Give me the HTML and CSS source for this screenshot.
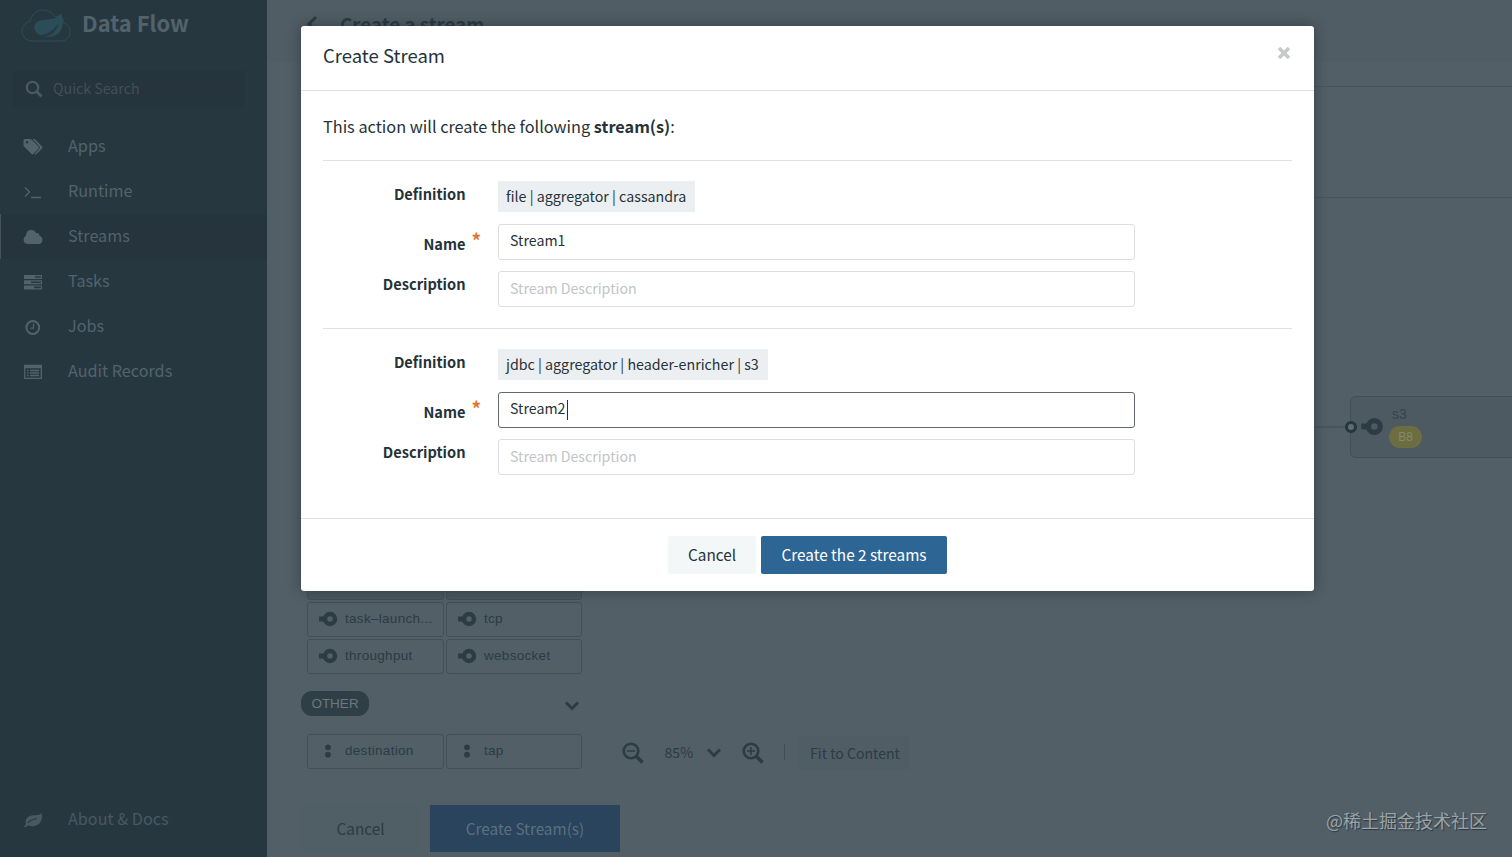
FILE: index.html
```html
<!DOCTYPE html>
<html lang="en">
<head>
    <meta charset="UTF-8">
    <meta name="viewport" content="width=device-width, initial-scale=1.0">
    <title>Data Flow</title>
    <link rel="stylesheet" href="styles.css">
</head>
<body>
    <svg class="symbols">
        <symbol id="sink" viewBox="0 0 20 16">
            <path d="M1 8h6" stroke="currentColor" stroke-width="5"/>
            <circle cx="12" cy="8" r="5" fill="none" stroke="currentColor" stroke-width="4.4"/>
        </symbol>
        <symbol id="dots" viewBox="0 0 20 16">
            <circle cx="10" cy="4.3" r="2.9" fill="currentColor"/>
            <circle cx="10" cy="11.7" r="2.9" fill="currentColor"/>
        </symbol>
        <symbol id="chevron" viewBox="0 0 16 12">
            <path d="M2 2.5l6 6 6-6" fill="none" stroke="currentColor" stroke-width="2.8"/>
        </symbol>
    </svg>

    <div class="app">
        <aside class="sidebar">
            <div class="brand">
                <svg width="50" height="34" viewBox="0 0 50 34">
                    <path d="M11 32C5 31.500 1 27.500 1 22c0-5 3.500-8.500 8-9.500C10 6 15 1 22 1c5 0 9.500 2.500 12 7 1-.6 2-.8 3-.8 4 0 5.500 3 5.500 6.500 4 1.500 6.500 5 6.500 9 0 5-3.500 8.800-8 9.300z" fill="none" stroke="#2f4e59" stroke-width="1"/>
                    <path d="M40 4c3 8 2 16-2 20-5 5-15 5-21 1-5-4-5-11 1-13 7-3 16 1 22-8z" fill="#2b4d58"/>
                    <path d="M15 26c10 1 17-4 23-12-3 9-9 15-20 14z" fill="#263a45"/>
                </svg>
                <span>Data Flow</span>
            </div>
            <div class="search">
                <svg width="18" height="18" viewBox="0 0 18 18" fill="none" stroke="currentColor">
                    <circle cx="7.500" cy="7.500" r="5.700" stroke-width="2.300"/>
                    <path d="M11.500 11.500l5 5" stroke-width="2.800"/>
                </svg>
                <span>Quick Search</span>
            </div>
            <nav class="menu">
                <a class="menu-item">
                    <svg width="20" height="18" viewBox="0 0 20 18" fill="currentColor">
                        <path fill-rule="evenodd" d="M.5 2.500Q.5 1 2 1h5q1 0 2 1l6.500 6.500q1 1 0 2L10.500 16q-1 .8-2 0L1.500 9Q.5 8 .5 7zM4 3a1.300 1.300 0 1 0 0 2.600A1.300 1.300 0 0 0 4 3z"/>
                        <path d="M9.500 1h1.200q1 0 2 1l6.300 6.500q1 1 0 2L13.500 16q-1 .9-2 .2l5-5.700q1-1 0-2z"/>
                    </svg>
                    <span>Apps</span>
                </a>
                <a class="menu-item">
                    <svg width="20" height="18" viewBox="0 0 20 18" fill="none" stroke="currentColor" stroke-width="1.400">
                        <path d="M2 4.500l4.500 4.500L2 13.500M8 14.500h10"/>
                    </svg>
                    <span>Runtime</span>
                </a>
                <a class="menu-item active">
                    <svg width="20" height="18" viewBox="0 0 20 18" fill="currentColor">
                        <path d="M4.800 16Q.5 15.500.5 11.500.5 9 3 7.700 3 2 8.200 2q3.500 0 5 3 3-.6 3.300 2.700 3 .8 3 4.200 0 3.600-4 4.100z"/>
                    </svg>
                    <span>Streams</span>
                </a>
                <a class="menu-item">
                    <svg width="20" height="18" viewBox="0 0 20 18" fill="currentColor">
                        <path fill-rule="evenodd" d="M1 2h18v4H1zM12 3.200v1.600h6V3.200zM1 7.200h18v4H1zM8 8.400V10h10V8.400zM1 12.400h18v4H1zM11 13.600v1.600h7v-1.600z"/>
                    </svg>
                    <span>Tasks</span>
                </a>
                <a class="menu-item">
                    <svg width="20" height="18" viewBox="0 0 20 18" fill="none" stroke="currentColor">
                        <circle cx="9.800" cy="9.500" r="6.400" stroke-width="2"/>
                        <path d="M10.500 5.500v4.700H7.500" stroke-width="1.200"/>
                    </svg>
                    <span>Jobs</span>
                </a>
                <a class="menu-item">
                    <svg width="20" height="18" viewBox="0 0 20 18" fill="none" stroke="currentColor">
                        <path d="M1.700 3v12.300h16.600V3" stroke-width="1.300"/>
                        <path d="M1 3.500h18" stroke-width="3.500"/>
                        <path d="M4 7.500h1.500M7 7.500h9M4 10h1.500M7 10h9M4 12.500h1.500M7 12.500h9" stroke-width="1.300"/>
                    </svg>
                    <span>Audit Records</span>
                </a>
            </nav>
            <a class="menu-item about">
                <svg width="20" height="18" viewBox="0 0 20 18">
                    <path d="M18.500 2c1 4 .5 9-3.500 11.500-3.500 2.300-7.500 2-10 .7L2.500 16.500l-1.500-1 2-2.500C1.500 8 5 5 9 4.500 13 4 16 4.500 18.500 2z" fill="currentColor"/>
                    <path d="M5 12c2-2.500 4-3.700 8.500-4.500" fill="none" stroke="#26353f" stroke-width="1.200"/>
                </svg>
                <span>About &amp; Docs</span>
            </a>
        </aside>

        <main class="content">
            <header class="page-header">
                <svg width="12" height="18" viewBox="0 0 12 18" fill="none" stroke="currentColor" stroke-width="3">
                    <path d="M10 2L3 9l7 7"/>
                </svg>
                <h1>Create a stream</h1>
            </header>
            <div class="editor"></div>
            <div class="workspace">
                <div class="palette">
                    <div class="palette-grid">
                        <div class="app-node shaded"></div>
                        <div class="app-node shaded"></div>
                        <div class="app-node"><svg><use href="#sink"/></svg><span>task&ndash;launch...</span></div>
                        <div class="app-node"><svg><use href="#sink"/></svg><span>tcp</span></div>
                        <div class="app-node"><svg><use href="#sink"/></svg><span>throughput</span></div>
                        <div class="app-node"><svg><use href="#sink"/></svg><span>websocket</span></div>
                    </div>
                    <div class="group-title">
                        <span class="pill">OTHER</span>
                        <svg width="16" height="12"><use href="#chevron"/></svg>
                    </div>
                    <div class="palette-grid">
                        <div class="app-node"><svg><use href="#dots"/></svg><span>destination</span></div>
                        <div class="app-node"><svg><use href="#dots"/></svg><span>tap</span></div>
                    </div>
                </div>
                <div class="canvas">
                    <div class="link"></div>
                    <div class="stream-node">
                        <i class="port"></i>
                        <svg width="24" height="19"><use href="#sink"/></svg>
                        <div class="node-info">
                            <span>s3</span>
                            <b>B8</b>
                        </div>
                    </div>
                    <div class="zoom-bar">
                        <svg width="22" height="22" viewBox="0 0 22 22" fill="none" stroke="currentColor">
                            <circle cx="9" cy="9" r="7.300" stroke-width="2.600"/>
                            <path d="M14 14l6.500 6.500" stroke-width="3.500"/>
                            <path d="M5 9h8" stroke-width="1.500"/>
                        </svg>
                        <span class="percent">85%</span>
                        <svg class="drop" width="16" height="12"><use href="#chevron"/></svg>
                        <svg width="22" height="22" viewBox="0 0 22 22" fill="none" stroke="currentColor">
                            <circle cx="9" cy="9" r="7.300" stroke-width="2.600"/>
                            <path d="M14 14l6.500 6.500" stroke-width="3.500"/>
                            <path d="M5 9h8M9 5v8" stroke-width="1.500"/>
                        </svg>
                        <span class="divider"></span>
                        <span class="fit">Fit to Content</span>
                    </div>
                </div>
            </div>
            <footer class="page-actions">
                <button class="page-btn">Cancel</button>
                <button class="page-btn page-btn-primary">Create Stream(s)</button>
            </footer>
        </main>
    </div>

    <div class="modal">
        <div class="modal-header">
            <h4>Create Stream</h4>
            <svg class="close" width="14" height="14" viewBox="0 0 14 14">
                <path d="M2 2l10 10M12 2L2 12" stroke="#c8c9c9" stroke-width="3.600"/>
            </svg>
        </div>
        <div class="modal-body">
            <p class="intro">This action will create the following <strong>stream(s)</strong>:</p>
            <div class="stream-form">
                <label class="label-definition">Definition</label>
                <div><code>file | aggregator | cassandra</code></div>
                <label class="label-name">Name<i>*</i></label>
                <input type="text" value="Stream1">
                <label class="label-description">Description</label>
                <input type="text" placeholder="Stream Description">
            </div>
            <div class="stream-form">
                <label class="label-definition">Definition</label>
                <div><code>jdbc | aggregator | header-enricher | s3</code></div>
                <label class="label-name">Name<i>*</i></label>
                <div class="field-focus">
                    <input type="text" value="Stream2">
                    <span class="caret"></span>
                </div>
                <label class="label-description">Description</label>
                <input type="text" placeholder="Stream Description">
            </div>
        </div>
        <div class="modal-footer">
            <button class="btn">Cancel</button>
            <button class="btn btn-primary">Create the 2 streams</button>
        </div>
    </div>

    <div class="watermark">@稀土掘金技术社区</div>
</body>
</html>
```

FILE: styles.css
```css
* {
    box-sizing: border-box;
}

body {
    margin: 0;
    height: 857px;
    overflow: hidden;
    font-family: "Noto Sans CJK SC", "Noto Sans", sans-serif;
    font-size: 16.2px;
    line-height: 24px;
    color: #263238;
    background: #525f67;
}

h1, h4, p {
    margin: 0;
}

svg {
    display: block;
    flex: none;
}

button, input {
    font-family: inherit;
}

.symbols {
    width: 0;
    height: 0;
    position: absolute;
}

.app {
    display: flex;
    height: 857px;
}

/* sidebar */
.sidebar {
    width: 267px;
    flex: none;
    display: flex;
    flex-direction: column;
    background: #273740;
    color: #53636c;
}

.brand {
    display: flex;
    align-items: center;
    gap: 11px;
    height: 70px;
    padding: 0 0 19px 21px;
    font-size: 21.9px;
    font-weight: bold;
}

.brand span {
    padding-bottom: 5px;
}

.search {
    display: flex;
    align-items: center;
    gap: 9px;
    width: 232px;
    height: 37px;
    margin-left: 13px;
    padding-left: 12px;
    background: #25343d;
    font-size: 14.2px;
    color: #41515a;
}

.search span {
    padding: 0 0 2px 1px;
}

.search svg {
    color: #4a5a63;
}

.menu {
    margin-top: 17px;
    flex: 1;
}

.menu-item {
    display: flex;
    align-items: center;
    gap: 25.5px;
    height: 45px;
    padding-left: 22px;
    border-left: 1px solid transparent;
}

.menu-item span {
    padding-bottom: 3px;
}

.menu-item svg {
    margin-left: -0.5px;
}

.menu-item.active {
    background: #25343d;
    border-left-color: #43545d;
}

.about {
    margin-bottom: 15px;
    color: #485962;
}

/* page behind the dialog */
.content {
    flex: 1;
    min-width: 0;
    display: flex;
    flex-direction: column;
    color: #2c3b44;
}

.page-header {
    display: flex;
    align-items: center;
    gap: 22px;
    height: 62px;
    padding: 0 0 15px 39px;
    background: #505d65;
}

.page-header h1 {
    font-size: 18.8px;
    font-weight: bold;
}

.editor {
    height: 112px;
    margin: 24px 0 0 34px;
    border: 1px solid #47545d;
    border-right: 0;
}

.workspace {
    flex: 1;
    display: flex;
    margin-left: 34px;
}

.palette {
    width: 289px;
    display: flex;
    flex-direction: column;
    justify-content: flex-end;
    padding-bottom: 36px;
    font-family: "Liberation Sans", Arial, sans-serif;
    font-size: 13.5px;
}

.palette-grid {
    display: grid;
    grid-template-columns: 137px 136px;
    gap: 2px;
    padding-left: 6px;
}

.app-node {
    display: flex;
    align-items: center;
    gap: 7px;
    height: 35px;
    padding: 0 0 1px 10px;
    border: 1px solid #434f58;
    border-radius: 3px;
    letter-spacing: 0.3px;
}

.app-node.shaded {
    background: #4b575f;
}

.app-node svg {
    width: 20px;
    height: 16px;
}

.group-title {
    display: flex;
    align-items: center;
    justify-content: space-between;
    height: 60px;
    padding: 0 10px 1px 0;
}

.pill {
    width: 68px;
    height: 25px;
    border-radius: 11px;
    background: #2f3e47;
    color: #6b7980;
    line-height: 25px;
    text-align: center;
}

.group-title svg {
    margin-top: 5px;
}

.canvas {
    flex: 1;
    position: relative;
    display: flex;
    align-items: flex-end;
}

.link {
    position: absolute;
    left: 700px;
    top: 228px;
    width: 60px;
    height: 2px;
    background: #47555d;
}

.stream-node {
    position: absolute;
    left: 760px;
    top: 198px;
    width: 180px;
    height: 62px;
    display: flex;
    padding: 8px 0 0 9px;
    background: #4d5a62;
    border: 1px solid #434f58;
    border-radius: 6px;
    font-family: "Liberation Sans", Arial, sans-serif;
}

.stream-node svg {
    margin-top: 12px;
}

.port {
    position: absolute;
    left: -6px;
    top: 24px;
    width: 12px;
    height: 12px;
    border: 3px solid #26353f;
    border-radius: 50%;
    background: #5f6c73;
}

.node-info {
    display: flex;
    flex-direction: column;
    gap: 3px;
    margin-left: 5px;
    font-size: 14px;
    line-height: 18px;
    color: #35444d;
}

.node-info span {
    padding-left: 3px;
}

.node-info b {
    width: 33px;
    height: 22px;
    border-radius: 11px;
    background: #6c6e42;
    color: #878a68;
    font-size: 12px;
    font-weight: normal;
    line-height: 22px;
    text-align: center;
}

.zoom-bar {
    display: flex;
    align-items: center;
    height: 34px;
    margin: 0 0 35px 32px;
    font-size: 14.1px;
}

.percent {
    width: 28px;
    margin: 0 13px 0 20.5px;
    padding-bottom: 2px;
}

.drop {
    margin-right: 20.5px;
}

.divider {
    width: 1px;
    height: 16px;
    margin: 0 13px 2px 20px;
    background: #3f4d56;
}

.fit {
    height: 34px;
    padding: 0 9px 0 12px;
    background: #505d65;
    line-height: 34px;
}

.page-actions {
    display: flex;
    gap: 10px;
    height: 52px;
    padding-left: 34px;
}

.page-btn {
    width: 119px;
    height: 47px;
    padding: 0 0 2px;
    border: 0;
    background: #505e65;
    color: #2c3b44;
    font-size: 15.3px;
}

.page-btn-primary {
    width: 190px;
    background: #29445c;
    color: #5c7080;
}

/* dialog */
.modal {
    position: absolute;
    left: 301px;
    top: 26px;
    width: 1013px;
    height: 565px;
    background: #fff;
    border-radius: 3px;
    box-shadow: 0 0 14px rgba(20, 30, 36, 0.45);
}

.modal-header {
    display: flex;
    justify-content: space-between;
    height: 65px;
    padding: 17px 23px 0 22px;
    border-bottom: 1px solid #dee1e3;
}

.modal-header h4 {
    font-size: 18.5px;
    font-weight: normal;
}

.close {
    margin-top: 3px;
}

.modal-body {
    padding: 0 22px 22px;
}

.intro {
    height: 69px;
    padding-top: 23px;
    font-size: 16.3px;
}

.stream-form {
    display: grid;
    grid-template-columns: 142.5px 637px;
    grid-template-rows: 31px 36px 36px;
    column-gap: 32.5px;
    row-gap: 11.5px;
    height: 168px;
    padding-top: 20px;
    border-top: 1px solid #dee1e3;
    font-size: 14.25px;
}

.stream-form label {
    font-size: 14.6px;
    font-weight: bold;
    text-align: right;
}

.label-definition {
    padding-top: 1px;
}

.label-name {
    position: relative;
    padding-top: 8px;
}

.label-name i {
    position: absolute;
    left: 148.5px;
    top: 4px;
    color: #e0762f;
    font-size: 19px;
    font-style: normal;
}

.label-description {
    padding-top: 1px;
}

code {
    display: inline-block;
    height: 31px;
    padding: 0 9px 0 8px;
    background: #eceff1;
    font-family: inherit;
    line-height: 30px;
}

input {
    width: 637px;
    height: 36px;
    padding: 0 11px 3px;
    border: 1px solid #dcdfe1;
    border-radius: 3px;
    outline: none;
    background: #fff;
    color: #263238;
    font-size: 14.2px;
}

input::placeholder {
    color: #c1c5c7;
}

.field-focus {
    position: relative;
}

.field-focus input {
    border-color: #62686d;
}

.caret {
    position: absolute;
    left: 69px;
    top: 8px;
    width: 1px;
    height: 20px;
    background: #263238;
}

.modal-footer {
    display: flex;
    justify-content: center;
    gap: 5px;
    padding-top: 17px;
    border-top: 1px solid #dee1e3;
}

.btn {
    width: 88px;
    height: 38px;
    padding: 0 0 2px;
    border: 0;
    border-radius: 2px;
    background: #f4f7f8;
    color: #263238;
    font-size: 15.3px;
}

.btn-primary {
    width: 186px;
    background: #2d6594;
    color: #fff;
}

.watermark {
    position: absolute;
    right: 25px;
    bottom: 25px;
    color: #9aa3a8;
    font-size: 18px;
    text-shadow: 1px 1px 1px #2c3840;
}
```
